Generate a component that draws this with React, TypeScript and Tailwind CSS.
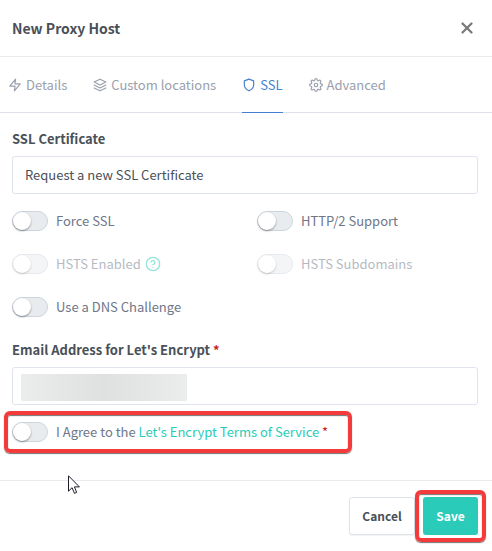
import type { ReactNode } from "react";
import { FiHelpCircle, FiLayers, FiSettings, FiShield, FiX, FiZap } from "react-icons/fi";

function Tab({ icon, label, active = false }: { icon: ReactNode; label: string; active?: boolean }) {
  return (
    <button
      type="button"
      role="tab"
      aria-selected={active}
      className={`-mb-px flex h-14 items-center gap-1 border-b ${
        active ? "border-[#467fcf] text-[#467fcf]" : "border-transparent text-[#9aa0ac]"
      }`}
    >
      {icon}
      <span>{label}</span>
    </button>
  );
}

function Toggle({ id, disabled = false, children }: { id: string; disabled?: boolean; children: ReactNode }) {
  return (
    <div className={`flex h-5 items-center gap-2 ${disabled ? "opacity-50" : ""}`}>
      <input
        id={id}
        type="checkbox"
        disabled={disabled}
        className="h-5 w-9 shrink-0 appearance-none rounded-full border border-[#cdd4de] bg-[#e9ecef] before:block before:size-[18px] before:rounded-full before:bg-white before:shadow-[0_1px_2px_rgba(0,0,0,0.4)] before:content-[''] checked:bg-[#467fcf] checked:before:translate-x-4"
      />
      <label htmlFor={id} className="flex items-center whitespace-nowrap text-[#6e7687]">
        {children}
      </label>
    </div>
  );
}

export default function App() {
  return (
    <form
      onSubmit={(e) => e.preventDefault()}
      className="relative bg-white font-['Noto_Sans_CJK_SC',sans-serif] text-[13px] leading-5 text-[#495057]"
    >
      <header className="flex h-[57px] items-center justify-between border-b border-[#e9ecef] pr-4 pb-px pl-3">
        <h1 className="text-sm leading-6 font-bold">New Proxy Host</h1>
        <button type="button" aria-label="Close" className="text-[#7b7b7b]">
          <FiX size={18} strokeWidth={3} />
        </button>
      </header>

      <div role="tablist" className="flex gap-[26px] border-b border-[#dee2e8] pl-2">
        <Tab icon={<FiZap size={14} />} label="Details" />
        <Tab icon={<FiLayers size={14} />} label="Custom locations" />
        <Tab icon={<FiShield size={14} />} label="SSL" active />
        <Tab icon={<FiSettings size={14} />} label="Advanced" />
      </div>

      <main className="px-3 pt-4 pb-[38px]">
        <div className="mr-0.5">
          <label htmlFor="certificate" className="mb-[7px] block font-bold">
            SSL Certificate
          </label>
          <select
            id="certificate"
            className="block h-[38px] w-full appearance-none rounded-[3px] border border-[#dfe4ec] bg-white px-3 text-[#495057]"
          >
            <option>Request a new SSL Certificate</option>
          </select>
        </div>

        <div className="mt-[17px] grid grid-cols-2 gap-x-[22px] gap-y-[23px]">
          <Toggle id="force-ssl">Force SSL</Toggle>
          <Toggle id="http2">HTTP/2 Support</Toggle>
          <Toggle id="hsts" disabled>
            HSTS Enabled
            <FiHelpCircle size={16} className="ml-1 text-[#2bcbba]" />
          </Toggle>
          <Toggle id="hsts-sub" disabled>
            HSTS Subdomains
          </Toggle>
          <Toggle id="dns">Use a DNS Challenge</Toggle>
        </div>

        <div className="mt-[23px] mr-0.5">
          <label htmlFor="email" className="mb-[7px] block font-bold">
            Email Address for Let&apos;s Encrypt <span className="text-[#cd201f]">*</span>
          </label>
          <div className="relative">
            <input
              id="email"
              type="email"
              className="block h-[38px] w-full rounded-[3px] border border-[#dfe4ec] bg-white px-3"
            />
            <span className="absolute top-[7px] left-[9px] h-[27px] w-[166px] bg-linear-to-r from-[#ebecec] via-[#dfe0e0] to-[#ebecec]" />
          </div>
        </div>

        <div className="relative mt-[17px] w-fit pr-4">
          <Toggle id="agree">
            <span>
              I Agree to the{" "}
              <a href="#terms" className="text-[#2bcbba]">
                Let&apos;s Encrypt Terms of Service
              </a>{" "}
              <span className="text-[#cd201f]">*</span>
            </span>
          </Toggle>
          <span
            aria-hidden="true"
            className="pointer-events-none absolute -inset-x-2 -inset-y-[11px] rounded-md border-4 border-[#f43b3b] shadow-[0_1px_1px_rgba(0,0,0,0.55),inset_0_1px_1px_rgba(0,0,0,0.55)]"
          />
        </div>
      </main>

      <footer className="flex justify-end gap-2 border-t border-[#e9ecef] py-4 pr-3.5 text-xs font-bold">
        <button
          type="button"
          className="h-[38px] min-w-[66px] rounded-[3px] border border-[#dfe4ec] bg-white px-3 shadow-[0_1px_1px_rgba(0,0,0,0.05)]"
        >
          Cancel
        </button>
        <div className="relative">
          <button type="submit" className="h-[38px] min-w-[55px] rounded-[3px] bg-[#2bcbba] px-3 text-white">
            Save
          </button>
          <span
            aria-hidden="true"
            className="pointer-events-none absolute -inset-x-2 -inset-y-[7px] rounded-md border-4 border-[#f43b3b] shadow-[0_1px_1px_rgba(0,0,0,0.55),inset_0_1px_1px_rgba(0,0,0,0.55)]"
          />
        </div>
      </footer>

      <svg
        aria-hidden="true"
        viewBox="0 0 12 20"
        className="pointer-events-none absolute top-[475px] left-[68px] h-5 w-3"
      >
        <path
          d="M.5 .8v15.4l3.6-3.5 2.4 5.7 2.2-1-2.3-5.5h5z"
          fill="white"
          stroke="#1d1d2b"
          strokeWidth="1"
        />
      </svg>
    </form>
  );
}
